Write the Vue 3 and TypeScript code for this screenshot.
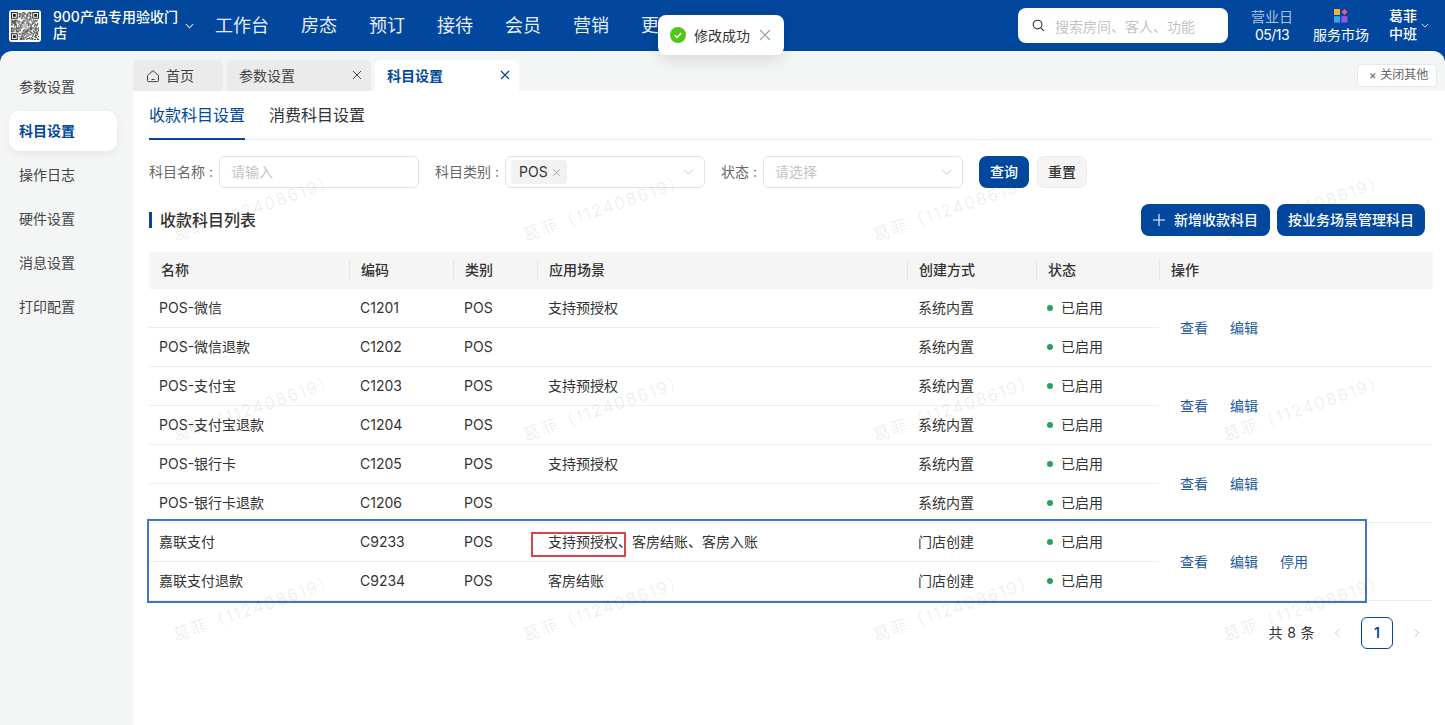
<script setup lang="ts">
interface Row { name: string; code: string; scene: string; method: string }
interface Group { rows: Row[]; actions: string[] }

const navItems: string[] = ['工作台', '房态', '预订', '接待', '会员', '营销', '更多']
const sideItems: string[] = ['参数设置', '科目设置', '操作日志', '硬件设置', '消息设置', '打印配置']

const groups: Group[] = [
  { actions: ['查看', '编辑'], rows: [
    { name: 'POS-微信', code: 'C1201', scene: '支持预授权', method: '系统内置' },
    { name: 'POS-微信退款', code: 'C1202', scene: '', method: '系统内置' } ] },
  { actions: ['查看', '编辑'], rows: [
    { name: 'POS-支付宝', code: 'C1203', scene: '支持预授权', method: '系统内置' },
    { name: 'POS-支付宝退款', code: 'C1204', scene: '', method: '系统内置' } ] },
  { actions: ['查看', '编辑'], rows: [
    { name: 'POS-银行卡', code: 'C1205', scene: '支持预授权', method: '系统内置' },
    { name: 'POS-银行卡退款', code: 'C1206', scene: '', method: '系统内置' } ] },
  { actions: ['查看', '编辑', '停用'], rows: [
    { name: '嘉联支付', code: 'C9233', scene: '支持预授权、客房结账、客房入账', method: '门店创建' },
    { name: '嘉联支付退款', code: 'C9234', scene: '客房结账', method: '门店创建' } ] },
]

const headers: string[] = ['名称', '编码', '类别', '应用场景', '创建方式', '状态', '操作']
const watermarks: number[] = Array.from({ length: 12 }, (_, i) => i)

const qrSize = 29
function inFinder(x: number, y: number): boolean {
  return (x < 8 && y < 8) || (x > qrSize - 9 && y < 8) || (x < 8 && y > qrSize - 9)
}
const qrCells: { x: number; y: number }[] = []
let seed = 7
for (let y = 0; y < qrSize; y++) {
  for (let x = 0; x < qrSize; x++) {
    seed = (seed * 1103515245 + 12345) & 0x7fffffff
    const center = x > 11 && x < 17 && y > 11 && y < 17
    if (!inFinder(x, y) && !center && (seed >> 16) % 2 === 0) qrCells.push({ x, y })
  }
}
const finders: { x: number; y: number }[] = [
  { x: 0, y: 0 }, { x: qrSize - 7, y: 0 }, { x: 0, y: qrSize - 7 },
]
</script>

<template>
  <div class="app">
    <header class="topbar">
      <div class="brand">
        <svg class="qr" viewBox="-2 -2 33 33" aria-hidden="true">
          <rect x="-2" y="-2" width="33" height="33" rx="3" fill="#fff" />
          <rect v-for="c in qrCells" :key="c.x + '-' + c.y" :x="c.x" :y="c.y" width="1" height="1" fill="#222" />
          <g v-for="f in finders" :key="f.x + '_' + f.y">
            <rect :x="f.x + 0.5" :y="f.y + 0.5" width="6" height="6" fill="none" stroke="#222" />
            <rect :x="f.x + 2" :y="f.y + 2" width="3" height="3" fill="#222" />
          </g>
          <circle cx="14.5" cy="14.5" r="2.4" fill="#bbb" />
        </svg>
        <div class="brand-name">900产品专用验收门店</div>
        <svg class="brand-caret" viewBox="0 0 10 6" aria-hidden="true"><path d="M1 1l4 4 4-4" /></svg>
      </div>
      <nav class="nav">
        <span v-for="n in navItems" :key="n">{{ n }}</span>
      </nav>
      <div class="top-right">
        <div class="search">
          <svg viewBox="0 0 16 16" aria-hidden="true"><circle cx="7" cy="7" r="4.6" /><path d="M10.5 10.5l3.3 3.3" /></svg>
          <span>搜索房间、客人、功能</span>
        </div>
        <div class="biz-date"><span class="dim">营业日</span><span class="date-val">05/13</span></div>
        <div class="market">
          <svg viewBox="0 0 14 14" aria-hidden="true">
            <rect x="0" y="0" width="6" height="6" fill="#f5b335" />
            <path d="M10.5 0l3 3-3 3-3-3z" fill="#ee5a7e" />
            <rect x="0" y="7.2" width="6" height="6.4" fill="#35a8f0" />
            <rect x="7.4" y="7.2" width="6" height="6.4" fill="#9a55e8" />
          </svg>
          <span>服务市场</span>
        </div>
        <div class="user"><span>葛菲</span><span>中班</span></div>
        <svg class="user-caret" viewBox="0 0 10 6" aria-hidden="true"><path d="M1 1l4 4 4-4" /></svg>
      </div>
    </header>

    <div class="toast">
      <svg viewBox="0 0 16 16" aria-hidden="true">
        <circle cx="8" cy="8" r="8" fill="#52c41a" />
        <path d="M4.6 8.2l2.4 2.3 4.3-4.6" fill="none" stroke="#fff" stroke-width="1.5" />
      </svg>
      <span>修改成功</span>
      <svg class="toast-x" viewBox="0 0 12 12" aria-hidden="true"><path d="M1 1l10 10M11 1L1 11" /></svg>
    </div>

    <div class="body">
      <aside class="side">
        <div v-for="(s, i) in sideItems" :key="s" class="side-item" :class="{ active: i === 1 }">{{ s }}</div>
      </aside>

      <section class="work">
        <div class="tabbar">
          <div class="tab home">
            <svg viewBox="0 0 14 14" aria-hidden="true"><path d="M1.5 6.5L7 1.6l5.5 4.9v5.2a.9.9 0 0 1-.9.9H2.4a.9.9 0 0 1-.9-.9z" /><path d="M5.5 10.5h3" /></svg>
            <span>首页</span>
          </div>
          <div class="tab wide">
            <span>参数设置</span>
            <svg viewBox="0 0 10 10" aria-hidden="true"><path d="M1 1l8 8M9 1L1 9" /></svg>
          </div>
          <div class="tab wide current">
            <span>科目设置</span>
            <svg viewBox="0 0 10 10" aria-hidden="true"><path d="M1 1l8 8M9 1L1 9" /></svg>
          </div>
          <div class="close-others">× 关闭其他</div>
        </div>

        <div class="panel">
          <div class="subtabs">
            <span class="subtab on">收款科目设置</span>
            <span class="subtab">消费科目设置</span>
          </div>

          <div class="filters">
            <label class="lb-name">科目名称 :</label>
            <div class="field"><span class="ph">请输入</span></div>
            <label class="lb-name next">科目类别 :</label>
            <div class="field select">
              <span class="chip">POS
                <svg viewBox="0 0 10 10" aria-hidden="true"><path d="M1.5 1.5l7 7M8.5 1.5l-7 7" /></svg>
              </span>
              <svg class="arrow" viewBox="0 0 12 7" aria-hidden="true"><path d="M1 1l5 5 5-5" /></svg>
            </div>
            <label class="lb-state next">状态 :</label>
            <div class="field select">
              <span class="ph">请选择</span>
              <svg class="arrow" viewBox="0 0 12 7" aria-hidden="true"><path d="M1 1l5 5 5-5" /></svg>
            </div>
            <button class="btn primary query">查询</button>
            <button class="btn ghost">重置</button>
          </div>

          <div class="list-head">
            <h2>收款科目列表</h2>
            <div class="list-actions">
              <button class="btn primary add">
                <svg viewBox="0 0 12 12" aria-hidden="true"><path d="M6 0v12M0 6h12" /></svg>
                新增收款科目
              </button>
              <button class="btn primary manage">按业务场景管理科目</button>
            </div>
          </div>

          <div class="table-wrap">
            <table>
              <colgroup>
                <col class="c1" /><col class="c2" /><col class="c3" /><col class="c4" /><col class="c5" /><col class="c6" /><col />
              </colgroup>
              <thead>
                <tr><th v-for="h in headers" :key="h">{{ h }}</th></tr>
              </thead>
              <tbody>
                <template v-for="g in groups" :key="g.rows[0].code">
                  <tr v-for="(r, i) in g.rows" :key="r.code">
                    <td class="name">{{ r.name }}</td>
                    <td>{{ r.code }}</td>
                    <td>POS</td>
                    <td>{{ r.scene }}</td>
                    <td>{{ r.method }}</td>
                    <td class="status"><i></i>已启用</td>
                    <td v-if="i === 0" rowspan="2" class="ops">
                      <a v-for="a in g.actions" :key="a">{{ a }}</a>
                    </td>
                  </tr>
                </template>
              </tbody>
            </table>
            <div class="mark-blue"></div>
            <div class="mark-red"></div>
          </div>

          <div class="pager">
            <span class="total">共 8 条</span>
            <svg class="pg" viewBox="0 0 7 12" aria-hidden="true"><path d="M6 1L1 6l5 5" /></svg>
            <span class="page-num">1</span>
            <svg class="pg" viewBox="0 0 7 12" aria-hidden="true"><path d="M1 1l5 5-5 5" /></svg>
          </div>
        </div>

        <div class="watermarks" aria-hidden="true">
          <div v-for="w in watermarks" :key="w" class="wm-cell"><span>葛菲（112408619）</span></div>
        </div>
      </section>
    </div>
  </div>
</template>

<style scoped>
.app {
  width: 1445px;
  height: 725px;
  position: relative;
  overflow: hidden;
  background: #00479d;
  font-family: Inter, "Noto Sans CJK SC", sans-serif;
  font-size: 14px;
  color: #333;
  display: flex;
  flex-direction: column;
}
svg { display: block; }

/* top bar */
.topbar {
  height: 51px;
  flex: none;
  display: flex;
  align-items: center;
  color: #fff;
}
.brand {
  width: 215px;
  flex: none;
  display: flex;
  align-items: center;
  padding: 0 0 0 9px;
  box-sizing: border-box;
}
.qr { width: 32px; height: 32px; flex: none; }
.brand-name {
  width: 128px;
  margin: 0 0 2px 12px;
  font-size: 14px;
  font-weight: 500;
  line-height: 16px;
}
.brand-caret { width: 9px; height: 6px; margin-left: 4px; }
.brand-caret path, .user-caret path { fill: none; stroke: #dce6f3; stroke-width: 1.2; }
.nav {
  display: flex;
  gap: 32px;
  font-size: 18px;
  color: #e6edf6;
  width: 467px;
  padding-bottom: 3px;
  white-space: nowrap;
  overflow: hidden;
  flex: none;
}
.top-right {
  flex: 1;
  display: flex;
  align-items: center;
  padding-left: 336px;
}
.search {
  width: 210px;
  height: 35px;
  flex: none;
  background: #fff;
  border-radius: 8px;
  display: flex;
  align-items: center;
  gap: 9px;
  padding-left: 13px;
  box-sizing: border-box;
  color: #c4c4c4;
}
.search svg { width: 15px; height: 15px; fill: none; stroke: #333; stroke-width: 1.2; }
.biz-date {
  width: 44px;
  margin-left: 22px;
  flex: none;
  display: flex;
  flex-direction: column;
  align-items: center;
  font-size: 14px;
  line-height: 18px;
  white-space: nowrap;
}
.date-val { letter-spacing: -0.5px; }
.dim { color: #a9c0dd; }
.market {
  margin-left: 19px;
  width: 56px;
  flex: none;
  display: flex;
  flex-direction: column;
  align-items: center;
  gap: 4px;
  font-size: 14px;
  line-height: 16px;
  white-space: nowrap;
  padding-top: 1px;
}
.market svg { width: 14px; height: 14px; }
.user {
  margin-left: 20px;
  padding-bottom: 1px;
  flex: none;
  display: flex;
  flex-direction: column;
  font-size: 14px;
  font-weight: 500;
  line-height: 18px;
}
.user-caret { width: 8px; height: 5px; margin-left: 4px; }

/* toast */
.toast {
  position: absolute;
  left: 658px;
  top: 15px;
  width: 126px;
  height: 40px;
  box-sizing: border-box;
  background: #fff;
  border-radius: 8px;
  box-shadow: 0 6px 16px rgba(0, 0, 0, 0.1);
  display: flex;
  align-items: center;
  padding-left: 12px;
  z-index: 5;
  color: #333;
}
.toast > svg:first-child { width: 16px; height: 16px; margin-right: 8px; }
.toast-x { width: 12px; height: 12px; margin-left: 9px; fill: none; stroke: #999; stroke-width: 1.1; }

/* body */
.body {
  flex: 1;
  display: flex;
  background: #f4f5f5;
  border-radius: 12px 12px 0 0;
  min-height: 0;
}
.side {
  width: 133px;
  flex: none;
  padding: 16px 0 0 9px;
  box-sizing: border-box;
  display: flex;
  flex-direction: column;
  gap: 4px;
}
.side-item {
  width: 108px;
  height: 40px;
  line-height: 40px;
  padding-left: 10px;
  box-sizing: border-box;
  border-radius: 10px;
  color: #444;
}
.side-item.active {
  background: #fff;
  color: #00479d;
  font-weight: 600;
  box-shadow: 0 3px 10px rgba(0, 0, 0, 0.06);
}

.work {
  flex: 1;
  min-width: 0;
  display: flex;
  flex-direction: column;
  position: relative;
}
.tabbar {
  height: 40px;
  flex: none;
  padding-top: 9px;
  box-sizing: border-box;
  display: flex;
  gap: 4px;
  position: relative;
}
.tab {
  height: 31px;
  box-sizing: border-box;
  background: #ebebeb;
  border-radius: 6px 6px 0 0;
  display: flex;
  align-items: center;
  padding-bottom: 2px;
  color: #444;
}
.tab.home { width: 90px; padding-left: 13px; gap: 6px; }
.tab.home svg { width: 14px; height: 14px; fill: none; stroke: #444; stroke-width: 1; margin-top: 2px; }
.tab.wide { width: 144px; padding: 0 9px 2px 12px; justify-content: space-between; }
.tab.wide svg { width: 10px; height: 10px; fill: none; stroke: #444; stroke-width: 1; }
.tab.current { background: #fff; color: #00479d; font-weight: 600; }
.tab.current svg { stroke: #00479d; stroke-width: 1.2; }
.close-others {
  position: absolute;
  right: 8px;
  top: 13px;
  width: 80px;
  height: 23px;
  box-sizing: border-box;
  padding-left: 3px;
  background: #fff;
  border: 1px solid #e8e8e8;
  border-radius: 3px;
  font-size: 12px;
  line-height: 20px;
  text-align: center;
  color: #666;
}

.panel {
  flex: 1;
  background: #fff;
  padding: 0 12px 0 16px;
  min-height: 0;
}
.subtabs {
  height: 49px;
  box-sizing: border-box;
  border-bottom: 1px solid #e8e8e8;
  display: flex;
  gap: 24px;
}
.subtab {
  font-size: 16px;
  height: 49px;
  line-height: 48px;
  box-sizing: border-box;
  color: #333;
}
.subtab.on { color: #00479d; border-bottom: 2px solid #00479d; }

.filters {
  display: flex;
  align-items: center;
  margin-top: 16px;
  height: 32px;
}
.filters label {
  color: #666;
  white-space: nowrap;
  flex: none;
  padding-bottom: 2px;
}
.lb-name { width: 70px; }
.lb-state { width: 42px; }
.filters label.next { margin-left: 16px; }
.field {
  width: 200px;
  height: 32px;
  flex: none;
  box-sizing: border-box;
  border: 1px solid #e3e3e3;
  border-radius: 6px;
  display: flex;
  align-items: center;
  justify-content: space-between;
  padding: 0 12px 2px 11px;
  background: #fff;
}
.field.select { padding: 0 10px 0 5px; }
.field.select .ph { margin: 0 0 2px 6px; }
.ph { color: #c4c4c4; }
.chip {
  height: 24px;
  background: #f2f2f2;
  border-radius: 4px;
  display: inline-flex;
  align-items: center;
  gap: 4px;
  padding: 0 6px 2px 8px;
  box-sizing: border-box;
}
.chip svg { width: 9px; height: 9px; fill: none; stroke: #999; stroke-width: 1; margin-top: 2px; }
.arrow { width: 11px; height: 6px; fill: none; stroke: #bbb; stroke-width: 1; }
.btn {
  font: inherit;
  border: none;
  cursor: default;
  border-radius: 8px;
  height: 32px;
  display: inline-flex;
  align-items: center;
  justify-content: center;
  font-weight: 500;
  padding: 0 0 2px;
}
.btn.primary { background: #00479d; color: #fff; }
.btn.ghost { background: #f5f5f5; border: 1px solid #ebebeb; color: #333; }
.query { width: 50px; margin-left: 16px; }
.filters .ghost { width: 50px; margin-left: 8px; }

.list-head {
  display: flex;
  align-items: center;
  justify-content: space-between;
  margin-top: 16px;
  height: 32px;
  padding-right: 8px;
}
.list-head h2 {
  margin: 0;
  font-size: 16px;
  font-weight: 500;
  color: #333;
  line-height: 16px;
  padding-left: 8px;
  border-left: 3px solid #00479d;
}
.list-actions { display: flex; gap: 7px; }
.add { width: 129px; gap: 9px; }
.add svg { width: 12px; height: 12px; fill: none; stroke: #fff; stroke-width: 1.1; margin-top: 2px; }
.manage { width: 148px; }

.table-wrap {
  margin-top: 16px;
  position: relative;
}
table {
  width: 1284px;
  table-layout: fixed;
  border-collapse: separate;
  border-spacing: 0;
}
.c1 { width: 200px; }
.c2 { width: 104px; }
.c3 { width: 84px; }
.c4 { width: 370px; }
.c5 { width: 129px; }
.c6 { width: 123px; }
th {
  height: 37px;
  padding: 0 0 1px 12px;
  box-sizing: border-box;
  background: #f5f5f5;
  text-align: left;
  font-weight: 500;
  line-height: 20px;
  color: #333;
  position: relative;
}
th + th::before {
  content: "";
  position: absolute;
  left: 0;
  top: 9px;
  bottom: 9px;
  width: 1px;
  background: #e4e4e4;
}
td {
  height: 39px;
  box-sizing: border-box;
  padding: 0 0 1px 11px;
  border-bottom: 1px solid #eeeeee;
  color: #333;
  line-height: 20px;
  white-space: nowrap;
}
td.name { padding-left: 10px; }
td.status { padding-left: 12px; }
td.status i {
  display: inline-block;
  width: 6px;
  height: 6px;
  border-radius: 50%;
  background: #27a35c;
  margin: 0 8px 2px -1px;
  vertical-align: middle;
}
td.ops { padding: 1px 0 0 21px; }
td.ops a { color: #1f5a9f; margin-right: 22px; }

.mark-blue {
  position: absolute;
  left: -2px;
  top: 267px;
  width: 1220px;
  height: 84px;
  box-sizing: border-box;
  border: 2px solid #3f74c8;
  pointer-events: none;
}
.mark-red {
  position: absolute;
  left: 382px;
  top: 280px;
  width: 95px;
  height: 25px;
  box-sizing: border-box;
  border: 2px solid #d8444a;
  pointer-events: none;
}

.pager {
  margin-top: 16px;
  display: flex;
  align-items: center;
  justify-content: flex-end;
  padding-right: 13px;
  height: 32px;
}
.total { letter-spacing: 0.4px; margin: 0 19px 0 1px; padding-bottom: 2px; }
.pg { width: 7px; height: 10px; fill: none; stroke: #bbb; stroke-width: 1; }
.page-num {
  width: 32px;
  height: 32px;
  box-sizing: border-box;
  border: 1px solid #00479d;
  border-radius: 6px;
  color: #00479d;
  font-weight: 600;
  text-align: center;
  line-height: 30px;
  margin: 0 20px;
}

.watermarks {
  position: absolute;
  left: 40px;
  top: 0;
  width: 1272px;
  height: 674px;
  padding-top: 171px;
  box-sizing: border-box;
  display: grid;
  grid-template-columns: repeat(4, 350px);
  grid-auto-rows: 200px;
  pointer-events: none;
}
.wm-cell span {
  display: inline-block;
  transform: rotate(-19deg);
  transform-origin: left center;
  white-space: nowrap;
  font-size: 17px;
  letter-spacing: 1.5px;
  color: rgba(0, 0, 0, 0.08);
}
</style>

<style>
html, body { margin: 0; padding: 0; background: #fff; }
</style>
